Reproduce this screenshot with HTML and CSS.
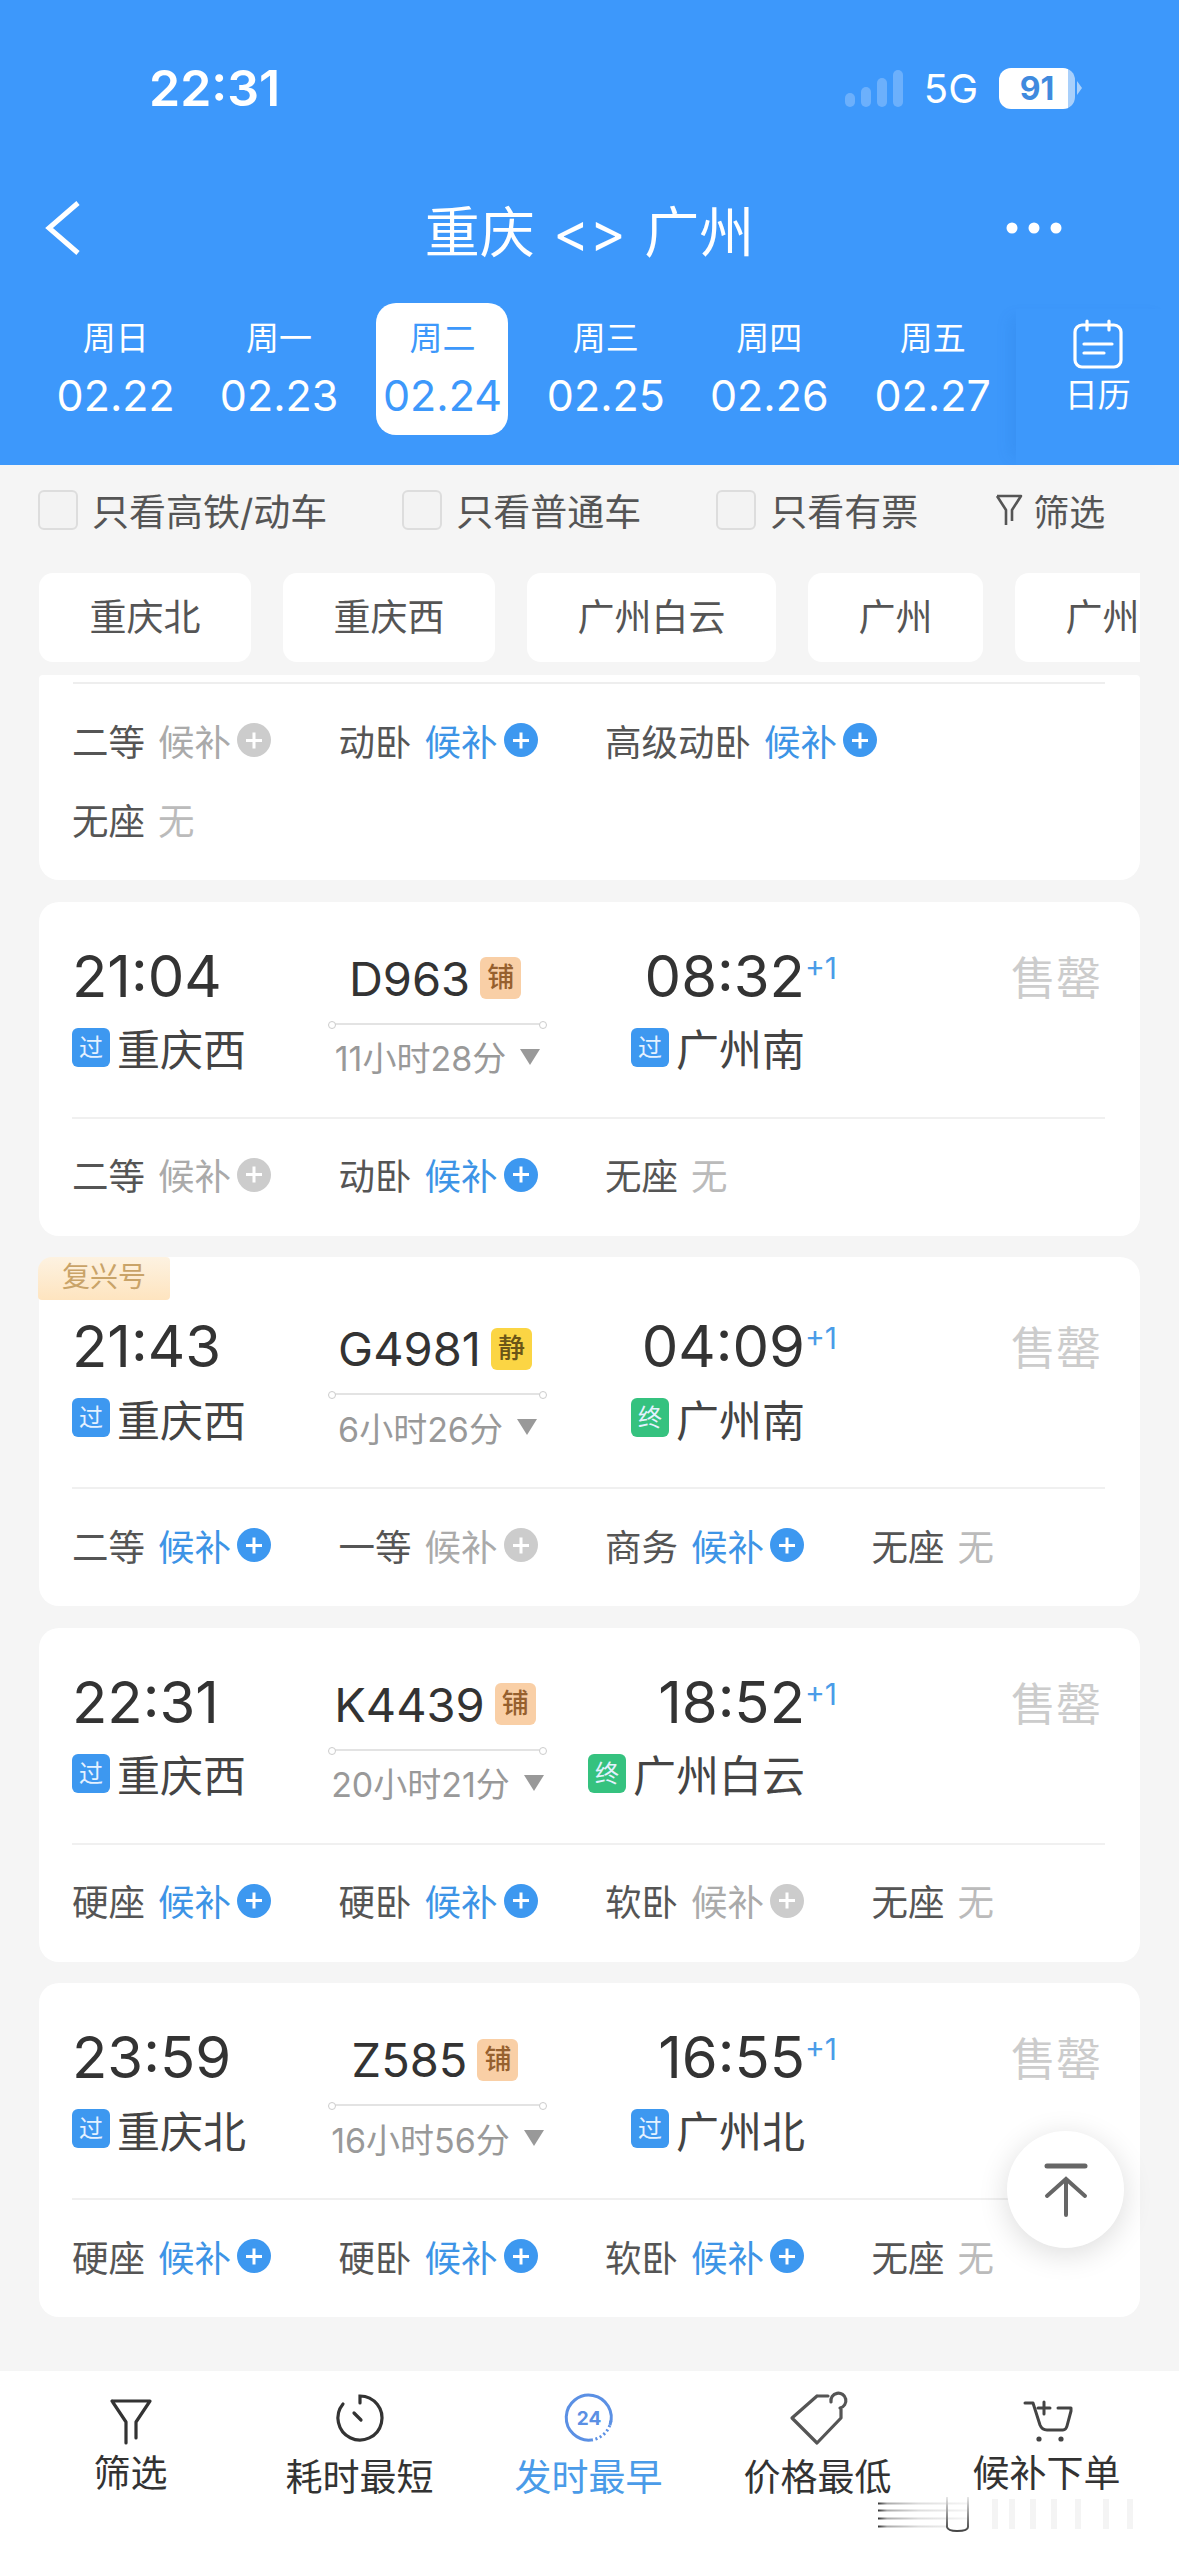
FILE: index.html
```html
<!DOCTYPE html>
<html lang="zh-CN">
<head>
    <meta charset="UTF-8">
    <meta name="viewport" content="width=device-width, initial-scale=1.0">
    <title>重庆 &lt;&gt; 广州</title>
    <link rel="stylesheet" href="styles.css">
</head>
<body>
<div class="page">
    <header class="header">
        <div class="status-bar">
            <span class="clock">22:31</span>
            <div class="status-right">
                <div class="signal"><i></i><i></i><i></i><i></i></div>
                <span class="net">5G</span>
                <div class="battery">91</div>
                <i class="battery-nub"></i>
            </div>
        </div>
        <div class="nav-bar">
            <svg class="back" width="36" height="54" viewBox="0 0 36 54"><path d="M33 2 L4 27 L33 52" fill="none" stroke="#fff" stroke-width="5"/></svg>
            <h1 class="title">重庆 &lt;&gt; 广州</h1>
            <svg class="more" width="56" height="12" viewBox="0 0 56 12"><circle cx="6" cy="6" r="5.5" fill="#fff"/><circle cx="28" cy="6" r="5.5" fill="#fff"/><circle cx="50" cy="6" r="5.5" fill="#fff"/></svg>
        </div>
        <div class="date-row">
            <div class="date-item"><span class="week">周日</span><span class="date">02.22</span></div>
            <div class="date-item"><span class="week">周一</span><span class="date">02.23</span></div>
            <div class="date-item active"><span class="week">周二</span><span class="date">02.24</span></div>
            <div class="date-item"><span class="week">周三</span><span class="date">02.25</span></div>
            <div class="date-item"><span class="week">周四</span><span class="date">02.26</span></div>
            <div class="date-item"><span class="week">周五</span><span class="date">02.27</span></div>
            <div class="calendar">
                <svg width="50" height="50" viewBox="0 0 50 50" fill="none" stroke="#fff" stroke-width="3.2" stroke-linecap="round"><rect x="2" y="6" width="46" height="42" rx="7"/><path d="M14 2 V11 M36 2 V11 M11 25 H39 M11 34 H31"/></svg>
                <span>日历</span>
            </div>
        </div>
    </header>

    <div class="filter-row">
        <label class="check"><i class="box"></i>只看高铁/动车</label>
        <label class="check"><i class="box"></i>只看普通车</label>
        <label class="check"><i class="box"></i>只看有票</label>
        <div class="filter-btn">
            <svg width="28" height="34" viewBox="0 0 28 34" fill="none" stroke="#555" stroke-width="2.6" stroke-linejoin="round"><path d="M2 3 H26 L17 17 V28 M2 3 L11 17 V32"/></svg>
            筛选
        </div>
    </div>

    <div class="chips">
        <span class="chip">重庆北</span>
        <span class="chip">重庆西</span>
        <span class="chip">广州白云</span>
        <span class="chip">广州</span>
        <span class="chip">广州南</span>
    </div>

    <main class="list">
        <section class="card card-cut">
            <div class="cut-line"></div>
            <div class="seats">
                <div class="seat">二等<em class="off">候补</em><i class="plus off"></i></div>
                <div class="seat">动卧<em>候补</em><i class="plus"></i></div>
                <div class="seat wide">高级动卧<em>候补</em><i class="plus"></i></div>
                <div class="seat">无座<em class="none">无</em></div>
            </div>
        </section>

        <section class="card">
            <div class="train">
                <div class="time">21:04</div>
                <div class="number">D963<i class="tag tag-bed">铺</i></div>
                <div class="time arrive">08:32<sup>+1</sup></div>
                <div class="sold">售罄</div>
                <div class="station"><i class="mark">过</i>重庆西</div>
                <div class="duration">11小时28分<i class="arrow"></i></div>
                <div class="station arrive"><i class="mark">过</i>广州南</div>
            </div>
            <div class="seats">
                <div class="seat">二等<em class="off">候补</em><i class="plus off"></i></div>
                <div class="seat">动卧<em>候补</em><i class="plus"></i></div>
                <div class="seat">无座<em class="none">无</em></div>
            </div>
        </section>

        <section class="card card-fx">
            <span class="ribbon">复兴号</span>
            <div class="train">
                <div class="time">21:43</div>
                <div class="number">G4981<i class="tag tag-quiet">静</i></div>
                <div class="time arrive">04:09<sup>+1</sup></div>
                <div class="sold">售罄</div>
                <div class="station"><i class="mark">过</i>重庆西</div>
                <div class="duration">6小时26分<i class="arrow"></i></div>
                <div class="station arrive"><i class="mark end">终</i>广州南</div>
            </div>
            <div class="seats">
                <div class="seat">二等<em>候补</em><i class="plus"></i></div>
                <div class="seat">一等<em class="off">候补</em><i class="plus off"></i></div>
                <div class="seat">商务<em>候补</em><i class="plus"></i></div>
                <div class="seat">无座<em class="none">无</em></div>
            </div>
        </section>

        <section class="card">
            <div class="train">
                <div class="time">22:31</div>
                <div class="number">K4439<i class="tag tag-bed">铺</i></div>
                <div class="time arrive">18:52<sup>+1</sup></div>
                <div class="sold">售罄</div>
                <div class="station"><i class="mark">过</i>重庆西</div>
                <div class="duration">20小时21分<i class="arrow"></i></div>
                <div class="station arrive"><i class="mark end">终</i>广州白云</div>
            </div>
            <div class="seats">
                <div class="seat">硬座<em>候补</em><i class="plus"></i></div>
                <div class="seat">硬卧<em>候补</em><i class="plus"></i></div>
                <div class="seat">软卧<em class="off">候补</em><i class="plus off"></i></div>
                <div class="seat">无座<em class="none">无</em></div>
            </div>
        </section>

        <section class="card">
            <div class="train">
                <div class="time">23:59</div>
                <div class="number">Z585<i class="tag tag-bed">铺</i></div>
                <div class="time arrive">16:55<sup>+1</sup></div>
                <div class="sold">售罄</div>
                <div class="station"><i class="mark">过</i>重庆北</div>
                <div class="duration">16小时56分<i class="arrow"></i></div>
                <div class="station arrive"><i class="mark">过</i>广州北</div>
            </div>
            <div class="seats">
                <div class="seat">硬座<em>候补</em><i class="plus"></i></div>
                <div class="seat">硬卧<em>候补</em><i class="plus"></i></div>
                <div class="seat">软卧<em>候补</em><i class="plus"></i></div>
                <div class="seat">无座<em class="none">无</em></div>
            </div>
        </section>
    </main>

    <div class="to-top">
        <svg width="44" height="54" viewBox="0 0 44 54" fill="none" stroke="#666" stroke-width="4" stroke-linecap="round"><path d="M3 3 H41" stroke-width="5"/><path d="M22 18 V52 M3 33 L22 16 L41 33"/></svg>
    </div>

    <nav class="bottom-nav">
        <div class="nav-item raised">
            <svg width="62" height="62" viewBox="0 0 62 62" fill="none" stroke="#333" stroke-width="3.2" stroke-linejoin="round" stroke-linecap="round"><path d="M12 14 H50 L36 35 V51 M12 14 L26 35 V56"/></svg>
            <span>筛选</span>
        </div>
        <div class="nav-item">
            <svg width="62" height="62" viewBox="0 0 62 62" fill="none" stroke="#333" stroke-width="3.2" stroke-linecap="round"><path d="M31 16 V9 A22 22 0 1 1 14 17 M25 26 L32 33"/></svg>
            <span>耗时最短</span>
        </div>
        <div class="nav-item current">
            <svg width="62" height="62" viewBox="0 0 62 62" fill="none" stroke="#5b90e4" stroke-width="3"><path d="M52 38 A22.5 22.5 0 1 0 33 53"/><path d="M33 53 A22.5 22.5 0 0 0 53 33" stroke-dasharray="2 2.6"/><text x="31" y="38" text-anchor="middle" class="nav-24">24</text></svg>
            <span>发时最早</span>
        </div>
        <div class="nav-item">
            <svg width="62" height="62" viewBox="0 0 62 62" fill="none" stroke="#555" stroke-width="3.2" stroke-linejoin="round" stroke-linecap="round"><path d="M30 9 H41 M54 22 V31 L30 56 L5 31 L30 9 M44 15 A7.5 7.5 0 1 1 53 21"/></svg>
            <span>价格最低</span>
        </div>
        <div class="nav-item raised">
            <svg width="62" height="62" viewBox="0 0 62 62" fill="none" stroke="#444" stroke-width="3" stroke-linecap="round" stroke-linejoin="round"><path d="M9 16 H17 L24 38 Q26 43 31 43 H47 Q50 43 51 39 L55 24 V21 H42 M28 15 V27 M22 21 H34"/><circle cx="23" cy="52" r="2.6" fill="#444" stroke="none"/><circle cx="45" cy="52" r="2.6" fill="#444" stroke="none"/></svg>
            <span>候补下单</span>
        </div>
        <svg class="smudge" width="280" height="40" viewBox="0 0 280 40" fill="none">
            <defs>
                <linearGradient id="fade"><stop offset="0" stop-color="#333"/><stop offset="0.1" stop-color="#aaa"/><stop offset="0.45" stop-color="#ddd"/><stop offset="1" stop-color="#f5f5f5"/></linearGradient>
                <linearGradient id="fadeV" x1="0" y1="0" x2="0" y2="1"><stop offset="0" stop-color="#e8e8e8"/><stop offset="1" stop-color="#444"/></linearGradient>
            </defs>
            <path d="M0 8.5 H90 M0 15.5 H90 M0 23.5 H90 M0 31.5 H70" stroke="url(#fade)" stroke-width="2"/>
            <path d="M69 2 V32 Q70 36 79 36 Q90 36 90 32 V2" stroke="url(#fadeV)" stroke-width="2"/>
            <path d="M117 4 V34 M134 4 V34 M155 4 V34 M176 4 V34 M200 4 V34 M228 4 V34 M252 4 V34" stroke="#f4f4f4" stroke-width="6"/>
        </svg>
    </nav>
</div>
</body>
</html>
```

FILE: styles.css
```css
* {
    box-sizing: border-box;
}
body {
    margin: 0;
    font-family: Inter, "Noto Sans CJK SC", sans-serif;
    background-color: #f5f5f5;
    color: #555;
}
i, em {
    font-style: normal;
}
.page {
    position: relative;
    width: 1179px;
    height: 2556px;
    display: flex;
    flex-direction: column;
    overflow: hidden;
}

/* header */
.header {
    height: 465px;
    flex: none;
    background-color: #3d98fb;
    color: #fff;
}
.status-bar {
    height: 176px;
    display: flex;
    align-items: center;
    justify-content: space-between;
    padding: 0 97px 0 149px;
}
.clock {
    font-weight: 600;
    font-size: 50px;
}
.status-right {
    display: flex;
    align-items: center;
}
.signal {
    display: flex;
    align-items: flex-end;
    gap: 6px;
    height: 38px;
    margin-right: 21px;
}
.signal i {
    width: 10px;
    border-radius: 5px;
    background-color: #6cb0fc;
}
.signal i:nth-child(1) { height: 14px; }
.signal i:nth-child(2) { height: 20px; }
.signal i:nth-child(3) { height: 29px; }
.signal i:nth-child(4) { height: 37px; }
.net {
    font-size: 40px;
    margin-right: 21px;
}
.battery {
    width: 76px;
    height: 41px;
    border-radius: 12px;
    background: linear-gradient(90deg, #fff 91%, #a9d0fb 91%);
    color: #3f8ade;
    font-size: 32px;
    font-weight: bold;
    line-height: 41px;
    text-align: center;
}
.battery-nub {
    width: 0;
    height: 0;
    margin-left: 2px;
    border-left: 5px solid #a9d0fb;
    border-top: 7px solid transparent;
    border-bottom: 7px solid transparent;
}
.nav-bar {
    height: 104px;
    display: grid;
    grid-template-columns: 1fr auto 1fr;
    align-items: center;
    padding: 0 45px;
}
.more {
    justify-self: end;
    margin-right: 72px;
}
.title {
    margin: 0;
    font-size: 55px;
    font-weight: 400;
    word-spacing: 3px;
    white-space: nowrap;
}
.date-row {
    display: flex;
    margin-top: 23px;
    padding-left: 34px;
    height: 162px;
}
.date-item {
    width: 163.4px;
    height: 132px;
    display: flex;
    flex-direction: column;
    align-items: center;
    justify-content: center;
    flex: none;
}
.date-item.active {
    width: 132px;
    margin: 0 15.7px;
    background-color: #fff;
    border-radius: 20px;
    color: #3d98fb;
}
.week {
    font-size: 33px;
    line-height: 44px;
}
.date {
    font-size: 43px;
    line-height: 54px;
    margin-top: 8px;
}
.calendar {
    flex: 1;
    margin: 6px 0 0 2px;
    height: 156px;
    padding-top: 10px;
    display: flex;
    flex-direction: column;
    align-items: center;
    font-size: 33px;
    box-shadow: -14px 0 14px -8px rgba(20, 90, 180, 0.1);
}
.calendar span {
    margin-top: 4px;
    line-height: 44px;
}

/* filters */
.filter-row {
    height: 90px;
    flex: none;
    display: flex;
    align-items: center;
    gap: 75px;
    padding-left: 38px;
    font-size: 37px;
}
.check {
    display: flex;
    align-items: center;
    gap: 14px;
}
.box {
    width: 40px;
    height: 40px;
    background-color: #f3f3f3;
    border: 2px solid #ddd;
    border-radius: 6px;
}
.filter-btn {
    display: flex;
    align-items: center;
    gap: 10px;
    margin-left: 2px;
    font-size: 36px;
}
.chips {
    flex: none;
    display: flex;
    gap: 32px;
    margin: 18px 39px 0;
    overflow: hidden;
}
.chip {
    flex: none;
    height: 89px;
    padding: 0 50.5px;
    background-color: #fff;
    border-radius: 14px;
    font-size: 37px;
    line-height: 89px;
}

/* train list */
.list {
    flex: 1;
    min-height: 0;
    margin-top: 13px;
    padding: 0 39px;
    overflow: hidden;
}
.card {
    background-color: #fff;
    border-radius: 20px;
    margin-bottom: 21.5px;
    padding: 0 35px 0 33px;
    position: relative;
}
.card-cut {
    border-radius: 4px 4px 20px 20px;
    padding-top: 7px;
}
.cut-line {
    height: 2px;
    margin-left: 1px;
    background-color: #eee;
}
.card-fx {
    padding-top: 15px;
}
.ribbon {
    position: absolute;
    left: -1px;
    top: 0;
    width: 132px;
    height: 43px;
    background: linear-gradient(180deg, #fdf2e1, #fee4bf);
    border-radius: 14px 4px 4px 4px;
    color: #c9a368;
    font-size: 28px;
    line-height: 41px;
    text-align: center;
}
.train {
    height: 217px;
    padding-top: 44px;
    display: grid;
    grid-template-columns: 258px 215px 260px 1fr;
    grid-template-rows: 60px 60px;
    row-gap: 14px;
    border-bottom: 2px solid #f0f0f0;
}
.time {
    font-size: 58px;
    line-height: 60px;
    color: #333;
}
.time.arrive {
    position: relative;
    justify-self: end;
}
.time sup {
    position: absolute;
    left: 100%;
    top: 2px;
    margin: 0;
    font-size: 30px;
    line-height: 40px;
    color: #4a9ce8;
}
.number {
    display: flex;
    align-items: center;
    justify-content: center;
    gap: 10px;
    padding: 5px 5px 0 0;
    font-size: 47px;
    color: #333;
}
.tag {
    width: 41px;
    height: 42px;
    border-radius: 6px;
    font-size: 27px;
    font-weight: 500;
    line-height: 42px;
    text-align: center;
}
.tag-bed {
    background-color: #f9cfa6;
    color: #96602e;
}
.tag-quiet {
    background-color: #fbd544;
    color: #6b5518;
}
.sold {
    justify-self: end;
    margin: 3px 4px 0 0;
    font-size: 45px;
    line-height: 60px;
    color: #ccc;
}
.station {
    display: flex;
    align-items: center;
    gap: 7px;
    padding-bottom: 5px;
    font-size: 43px;
    color: #444;
}
.station.arrive {
    justify-content: flex-end;
}
.mark {
    flex: none;
    width: 38px;
    height: 39px;
    background-color: #3d98f0;
    border-radius: 6px;
    color: #e4f1ff;
    font-size: 24px;
    line-height: 39px;
    text-align: center;
}
.mark.end {
    background-color: #35c27f;
}
.duration {
    position: relative;
    height: 54px;
    border-top: 2px solid #e3e3e3;
    margin-top: 3px;
    padding-top: 12px;
    display: flex;
    align-items: center;
    justify-content: center;
    gap: 14px;
    font-size: 34px;
    color: #999;
}
.duration::before,
.duration::after {
    content: "";
    position: absolute;
    top: -4px;
    width: 6px;
    height: 6px;
    background-color: #fff;
    border: 1px solid #ccc;
    border-radius: 50%;
}
.duration::before { left: -2px; }
.duration::after { right: -2px; }
.arrow {
    width: 0;
    height: 0;
    border-left: 10px solid transparent;
    border-right: 10px solid transparent;
    border-top: 16px solid #999;
}
.seats {
    display: grid;
    grid-template-columns: repeat(4, 266.5px);
    row-gap: 37px;
    padding: 35px 0 40px;
    font-size: 36.5px;
}
.seat {
    display: flex;
    align-items: center;
    height: 42px;
    white-space: nowrap;
}
.seat.wide {
    grid-column: span 2;
}
.seat em {
    margin-left: 13px;
    color: #3d94e6;
}
.seat em.off {
    color: #aaa;
}
.seat em.none {
    color: #bbb;
}
.plus {
    position: relative;
    width: 34px;
    height: 34px;
    margin-left: 6px;
    background-color: #3d98f0;
    border-radius: 50%;
}
.plus.off {
    background-color: #ccc;
}
.plus::before,
.plus::after {
    content: "";
    position: absolute;
    left: 9px;
    top: 15.5px;
    width: 16px;
    height: 3px;
    background-color: #fff;
}
.plus::after {
    transform: rotate(90deg);
}

.to-top {
    position: absolute;
    left: 1007px;
    top: 2131px;
    width: 117px;
    height: 117px;
    background-color: #fff;
    border-radius: 50%;
    box-shadow: 0 6px 30px rgba(0, 0, 0, 0.14);
    display: flex;
    align-items: center;
    justify-content: center;
}

/* bottom bar */
.bottom-nav {
    position: relative;
    height: 185px;
    flex: none;
    display: grid;
    grid-template-columns: repeat(5, 229px);
    padding: 16px 0 0 16px;
    background-color: #fff;
}
.nav-item {
    display: flex;
    flex-direction: column;
    align-items: center;
    font-size: 37px;
    line-height: 50px;
    color: #333;
}
.nav-item span {
    margin-top: 4px;
}
.nav-item.raised span {
    margin-top: 0;
}
.nav-item.current {
    color: #4a9be8;
}
.nav-24 {
    font-size: 19px;
    font-weight: bold;
    fill: #5b90e4;
    stroke: none;
}
.smudge {
    position: absolute;
    left: 878px;
    top: 124px;
}
```
